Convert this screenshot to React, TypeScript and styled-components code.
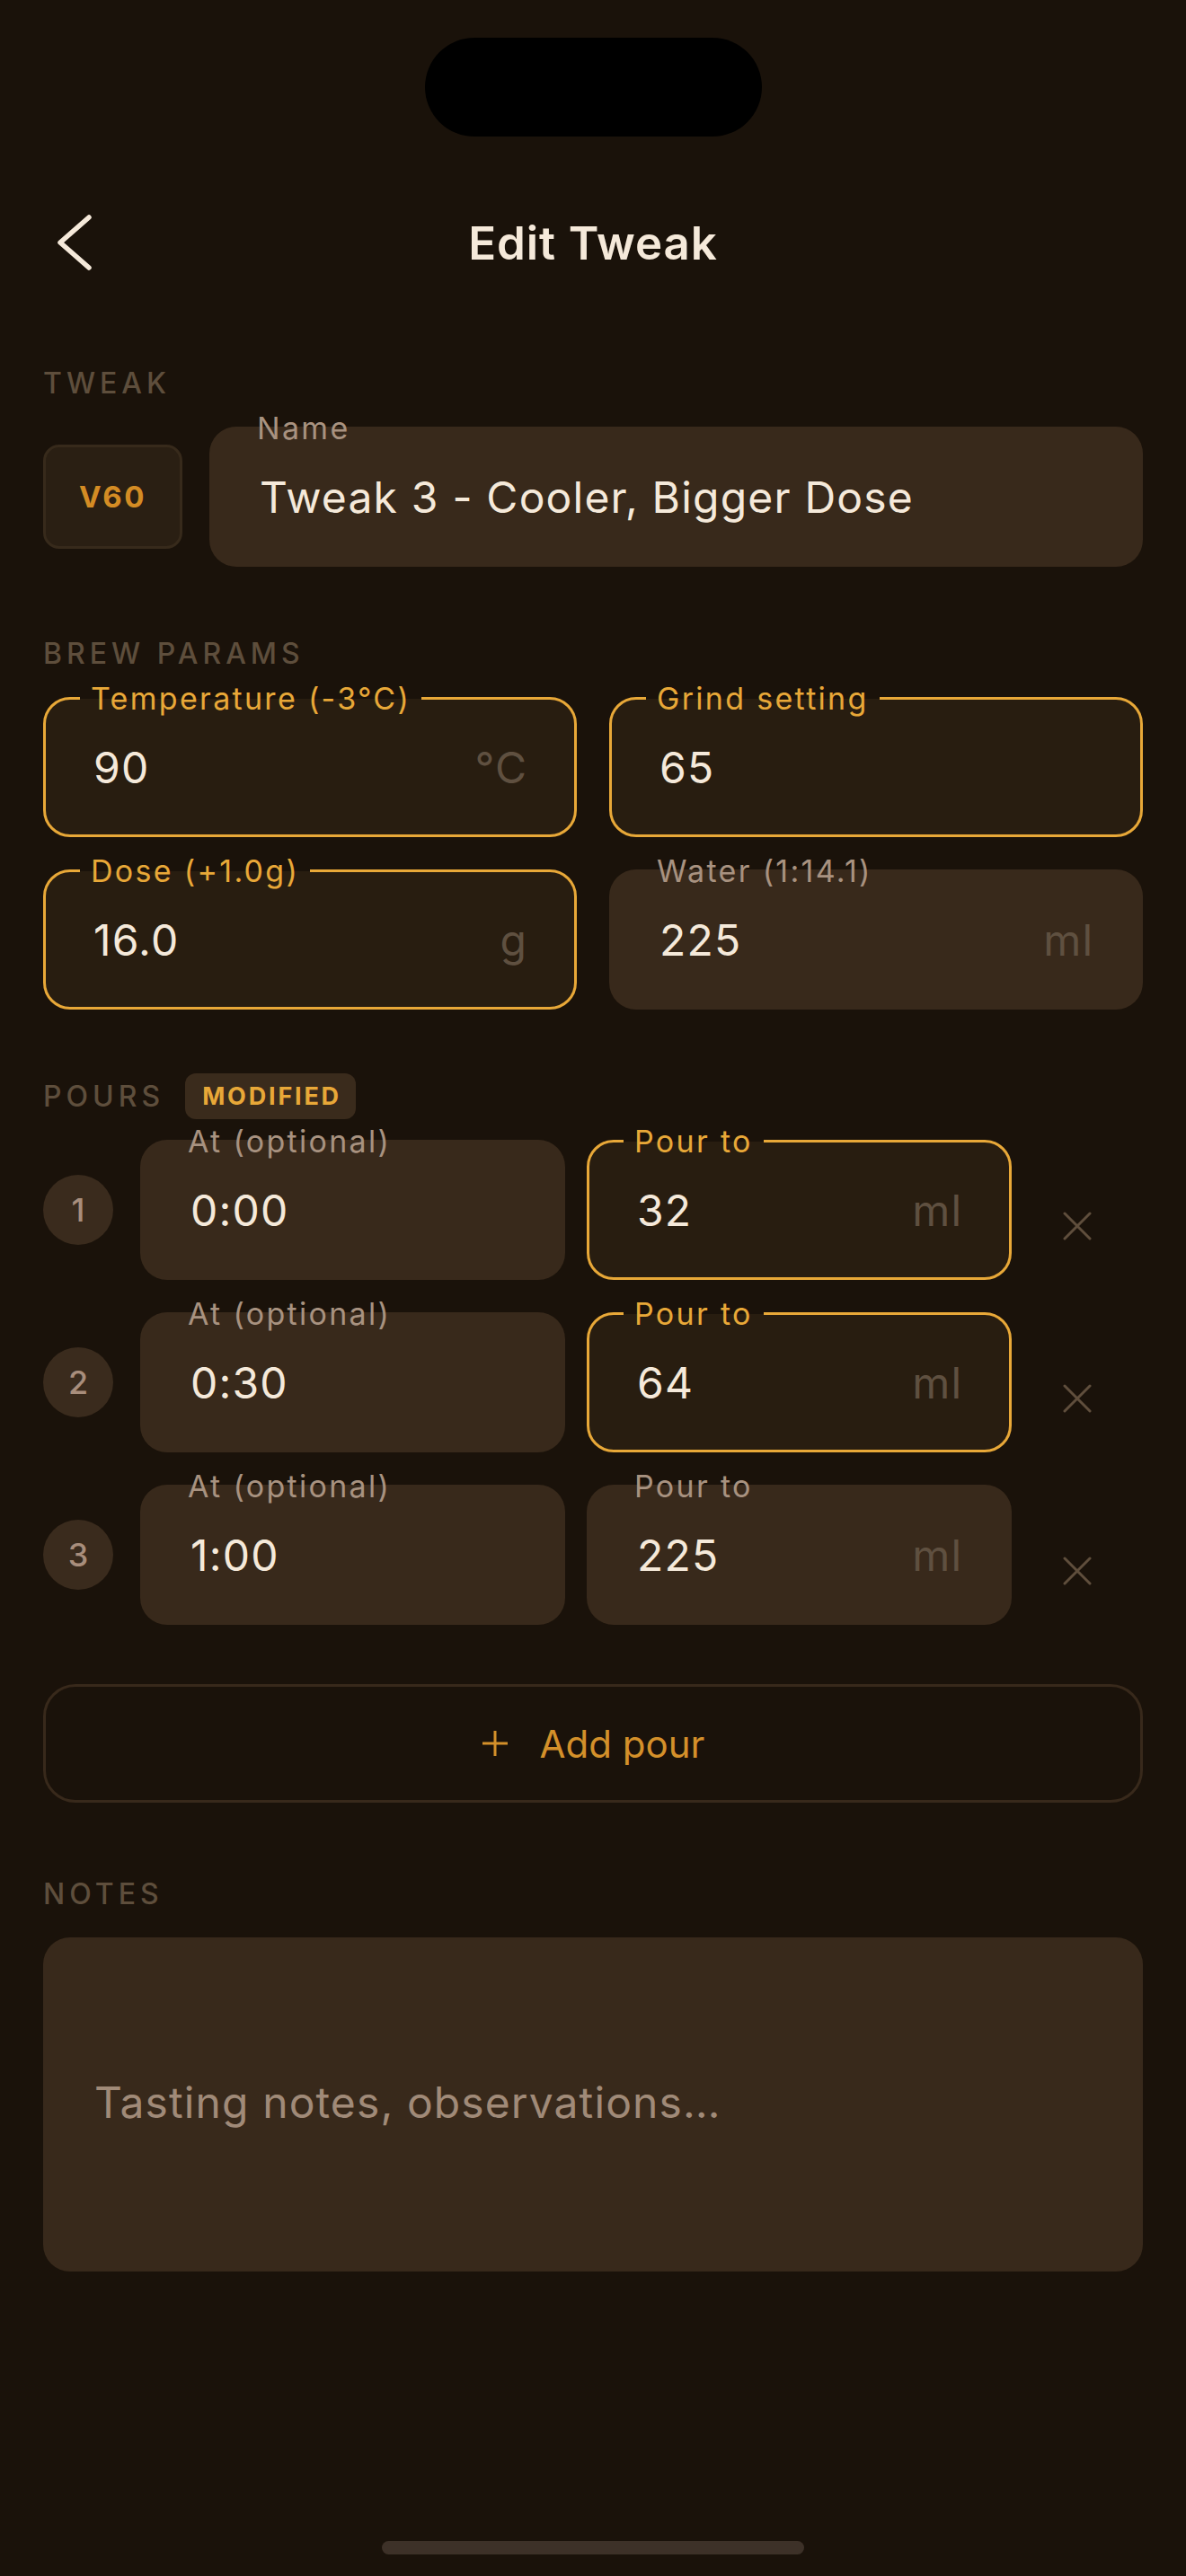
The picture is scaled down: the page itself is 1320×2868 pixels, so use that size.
import React from "react";
import styled, { createGlobalStyle } from "styled-components";

const GlobalStyle = createGlobalStyle`
  html, body {
    margin: 0;
    padding: 0;
    background: #1a120a;
  }
  * {
    box-sizing: border-box;
  }
  body {
    font-family: "Inter", "Noto Sans", sans-serif;
    -webkit-font-smoothing: antialiased;
  }
`;

type Param = {
  label: string;
  value: string;
  unit?: string;
  active?: boolean;
};

type Pour = {
  at: string;
  to: string;
  modified?: boolean;
};

const brewParams: Param[] = [
  { label: "Temperature (-3°C)", value: "90", unit: "°C", active: true },
  { label: "Grind setting", value: "65", active: true },
  { label: "Dose (+1.0g)", value: "16.0", unit: "g", active: true },
  { label: "Water (1:14.1)", value: "225", unit: "ml" },
];

const pours: Pour[] = [
  { at: "0:00", to: "32", modified: true },
  { at: "0:30", to: "64", modified: true },
  { at: "1:00", to: "225" },
];

const ChevronLeft = () => (
  <svg width="60" height="70" viewBox="0 0 60 70" fill="none">
    <polyline
      points="51,7 19,35 51,63"
      stroke="#f5e9da"
      strokeWidth="5.5"
      strokeLinecap="round"
      strokeLinejoin="round"
    />
  </svg>
);

const CloseIcon = () => (
  <svg width="32" height="32" viewBox="0 0 32 32" fill="none">
    <path d="M2 2 L30 30 M30 2 L2 30" stroke="#5f4e3c" strokeWidth="3" strokeLinecap="round" />
  </svg>
);

const PlusIcon = () => (
  <svg width="30" height="30" viewBox="0 0 30 30" fill="none">
    <path d="M15 1 V29 M1 15 H29" stroke="#d4902a" strokeWidth="3" />
  </svg>
);

interface FieldProps {
  label: string;
  value: string;
  unit?: string;
  active?: boolean;
}

const TextField = ({ label, value, unit, active }: FieldProps) => (
  <Field $active={active}>
    <FloatLabel $active={active}>{label}</FloatLabel>
    <ValueInput defaultValue={value} />
    {unit && <Unit>{unit}</Unit>}
  </Field>
);

const App = () => {
  return (
    <>
      <GlobalStyle />
      <Page>
        <StatusBar>
          <Island />
        </StatusBar>

        <Header>
          <BackButton type="button" aria-label="Back">
            <ChevronLeft />
          </BackButton>
          <Title>Edit Tweak</Title>
          <span />
        </Header>

        <Content>
          <Section $top={83}>
            <Heading>
              <SectionLabel>TWEAK</SectionLabel>
            </Heading>
            <TweakRow>
              <MethodBadge>V60</MethodBadge>
              <TextField label="Name" value="Tweak 3 - Cooler, Bigger Dose" />
            </TweakRow>
          </Section>

          <Section $top={71}>
            <Heading>
              <SectionLabel>BREW PARAMS</SectionLabel>
            </Heading>
            <ParamGrid>
              {brewParams.map((p) => (
                <TextField key={p.label} {...p} />
              ))}
            </ParamGrid>
          </Section>

          <Section $top={71}>
            <Heading>
              <SectionLabel>POURS</SectionLabel>
              <ModifiedTag>MODIFIED</ModifiedTag>
            </Heading>
            <PourList>
              {pours.map((pour, i) => (
                <PourRow key={i}>
                  <StepCircle>{i + 1}</StepCircle>
                  <PourPair>
                    <TextField label="At (optional)" value={pour.at} />
                    <TextField label="Pour to" value={pour.to} unit="ml" active={pour.modified} />
                  </PourPair>
                  <RemoveButton type="button" aria-label="Remove pour">
                    <CloseIcon />
                  </RemoveButton>
                </PourRow>
              ))}
            </PourList>
            <AddPourButton type="button">
              <PlusIcon />
              Add pour
            </AddPourButton>
          </Section>

          <Section $top={76}>
            <Heading>
              <SectionLabel>NOTES</SectionLabel>
            </Heading>
            <NotesArea placeholder="Tasting notes, observations…" />
          </Section>
        </Content>

        <HomeIndicator />
      </Page>
    </>
  );
};

export default App;

const Page = styled.div`
  width: 1320px;
  min-height: 2868px;
  background: #1a120a;
  display: flex;
  flex-direction: column;
`;

const StatusBar = styled.div`
  height: 222px;
  display: flex;
  justify-content: center;
  padding-top: 42px;
`;

const Island = styled.div`
  width: 375px;
  height: 110px;
  border-radius: 55px;
  background: #000;
`;

const Header = styled.header`
  height: 96px;
  padding: 0 48px;
  display: grid;
  grid-template-columns: 1fr auto 1fr;
  align-items: center;
`;

const BackButton = styled.button`
  justify-self: start;
  display: flex;
  padding: 0;
  border: none;
  background: none;
  cursor: pointer;
`;

const Title = styled.h1`
  margin: 0;
  font-size: 51px;
  font-weight: 600;
  color: #f5e9da;
  letter-spacing: 0.9px;
`;

const Content = styled.main`
  padding: 0 48px;
  display: flex;
  flex-direction: column;
`;

const Section = styled.section<{ $top: number }>`
  margin-top: ${(p) => p.$top}px;
  display: flex;
  flex-direction: column;
`;

const Heading = styled.div`
  height: 51px;
  margin-bottom: 23px;
  display: flex;
  align-items: center;
  gap: 23px;
`;

const SectionLabel = styled.h2`
  margin: 0;
  font-size: 32px;
  line-height: 40px;
  font-weight: 500;
  letter-spacing: 5px;
  color: #5e4e3c;
`;

const ModifiedTag = styled.span`
  height: 51px;
  padding: 0 16px 0 19px;
  display: flex;
  align-items: center;
  border-radius: 12px;
  background: #3a2b1c;
  color: #e8a838;
  font-size: 27px;
  font-weight: 700;
  letter-spacing: 2.8px;
`;

const TweakRow = styled.div`
  display: flex;
  align-items: center;
  gap: 30px;
`;

const MethodBadge = styled.div`
  width: 155px;
  height: 116px;
  flex: none;
  display: flex;
  align-items: center;
  justify-content: center;
  border: 3px solid #372a1b;
  border-radius: 18px;
  background: #2a1f13;
  color: #d48c24;
  font-size: 33px;
  font-weight: 700;
  letter-spacing: 2.5px;
`;

const Field = styled.div<{ $active?: boolean }>`
  position: relative;
  flex: 1;
  min-width: 0;
  height: 156px;
  padding: 0 52px 0 53px;
  display: flex;
  align-items: center;
  border: 3px solid ${(p) => (p.$active ? "#e8a838" : "transparent")};
  border-radius: 30px;
  background: ${(p) => (p.$active ? "#281d10" : "#38291b")};
`;

const FloatLabel = styled.span<{ $active?: boolean }>`
  position: absolute;
  top: -21.5px;
  left: 38px;
  padding: 0 12px;
  font-size: 34px;
  line-height: 40px;
  letter-spacing: 2.3px;
  white-space: nowrap;
  color: ${(p) => (p.$active ? "#e8a838" : "#a89280")};
  background: ${(p) =>
    p.$active ? "linear-gradient(to bottom, #1a120a 50%, #281d10 50%)" : "none"};
`;

const ValueInput = styled.input`
  flex: 1;
  min-width: 0;
  padding: 0;
  border: none;
  outline: none;
  background: none;
  font-family: inherit;
  font-size: 48px;
  letter-spacing: 1.2px;
  color: #f5e9da;
`;

const Unit = styled.span`
  font-size: 48px;
  letter-spacing: 1px;
  color: #5f5040;
`;

const ParamGrid = styled.div`
  display: grid;
  grid-template-columns: 1fr 1fr;
  gap: 36px;
`;

const PourList = styled.div`
  display: flex;
  flex-direction: column;
  gap: 36px;
`;

const PourRow = styled.div`
  display: flex;
  align-items: center;
`;

const StepCircle = styled.div`
  width: 78px;
  height: 78px;
  flex: none;
  margin-right: 30px;
  border-radius: 50%;
  display: flex;
  align-items: center;
  justify-content: center;
  background: #3a2b1d;
  color: #a88e7c;
  font-size: 36px;
  font-weight: 500;
`;

const PourPair = styled.div`
  flex: 1;
  display: grid;
  grid-template-columns: 1fr 1fr;
  gap: 24px;
`;

const RemoveButton = styled.button`
  width: 146px;
  height: 60px;
  flex: none;
  margin-top: 36px;
  padding: 0;
  display: flex;
  align-items: center;
  justify-content: center;
  border: none;
  background: none;
  cursor: pointer;
`;

const AddPourButton = styled.button`
  margin-top: 66px;
  height: 132px;
  display: flex;
  align-items: center;
  justify-content: center;
  gap: 35px;
  border: 3px solid #38291b;
  border-radius: 36px;
  background: none;
  font-family: inherit;
  font-size: 42px;
  color: #d4902a;
  cursor: pointer;
`;

const NotesArea = styled.textarea`
  height: 372px;
  padding: 155px 56px 0 57px;
  border: none;
  outline: none;
  resize: none;
  border-radius: 30px;
  background: #38291b;
  font-family: inherit;
  font-size: 48px;
  line-height: 58px;
  letter-spacing: 1.1px;
  color: #f5e9da;

  &::placeholder {
    color: #a08a78;
  }
`;

const HomeIndicator = styled.div`
  width: 470px;
  height: 15px;
  margin: auto auto 24px;
  border-radius: 8px;
  background: #3d3128;
`;
